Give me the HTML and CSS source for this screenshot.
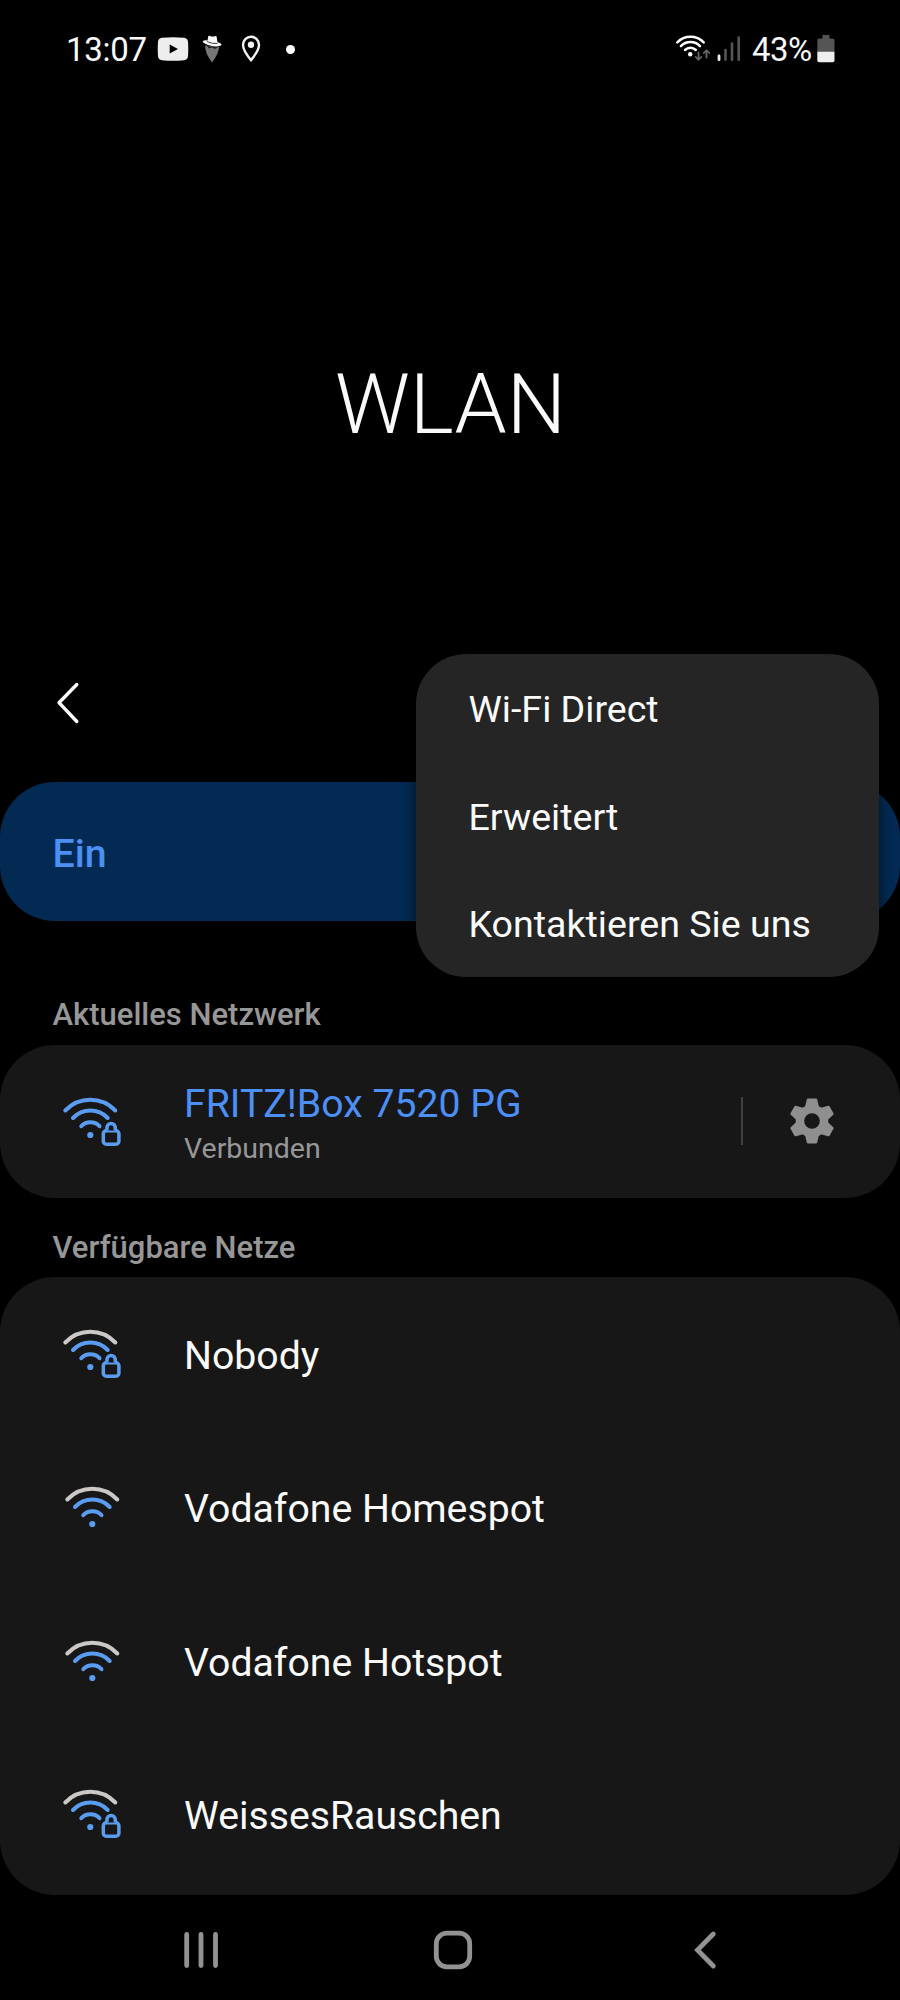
FILE: index.html
```html
<!DOCTYPE html>
<html lang="de">
<head>
<meta charset="utf-8">
<title>WLAN</title>
<link rel="stylesheet" href="styles.css">
</head>
<body>
<svg class="defs" aria-hidden="true">
  <symbol id="wifi" viewBox="0 0 62 54">
    <path class="outer" d="M6.300 17.500A34.500 34.500 0 0 1 56.300 17.500"/>
    <path class="inner" d="M14 25A24 24 0 0 1 48.700 25M22.300 33.200A12.700 12.700 0 0 1 40.500 33.200"/>
    <circle cx="31.300" cy="42" r="3.100"/>
  </symbol>
  <symbol id="lock" viewBox="0 0 24 26">
    <rect x="3.300" y="9.800" width="15.600" height="13.400" rx="3"/>
    <path d="M6.900 9.500V6.800a4.200 4.200 0 0 1 8.400 0V9.500"/>
  </symbol>
</svg>
<div class="screen">
  <header class="status">
    <div class="status-left">
      <span class="clock">13:07</span>
      <svg class="ic-video" width="32" height="24" viewBox="0 0 32 24"><path fill="#eee" d="M5 .8Q16-.4 27 .8Q30.800 1.200 31 5Q31.500 12 31 19Q30.800 22.800 27 23.200Q16 24.200 5 23.200Q1.200 22.800 1 19Q.5 12 1 5Q1.200 1.200 5 .8Z"/><path d="M12.700 7.500 21 12 12.700 16.500Z"/></svg>
      <svg class="ic-spy" width="20" height="28" viewBox="0 0 20 28"><path fill="#777" d="M3 10.500 17 12Q17 18 10 27.500Q3 18 3 10.500Z"/><path fill="#222" d="M5 11 16 12 13 14 10 12.500 7 13.500Z"/><path fill="#fafafa" d="M6.300 1Q8 .3 9 1.500L12 1.500Q14 .3 14.600 1.500L15.500 7.200Q19.500 8.200 19.700 10Q17 12.200 10 11Q1 9 .6 6.200Q2.500 4.600 5.500 5.500Z"/><path fill="none" stroke="#444" d="M5 6.600Q10 9 15.500 8.500"/></svg>
      <svg class="ic-pin" width="20" height="28" viewBox="0 0 20 28"><path fill="none" stroke="#f2f2f2" stroke-width="2.400" d="M10 25.200Q2 15.500 2 9.800A8 8 0 0 1 18 9.800Q18 15.500 10 25.200Z"/><circle cx="10" cy="9.800" r="3.200" fill="#f2f2f2"/></svg>
      <span class="more-dot"></span>
    </div>
    <div class="status-right">
      <svg class="ic-net" width="66" height="30" viewBox="0 0 66 30" fill="none" stroke-linecap="round">
        <path stroke="#fff" stroke-width="2.500" d="M2.300 8.300A18.500 18.500 0 0 1 28.700 8.300M5.900 12.200A13.200 13.200 0 0 1 25 12.200M10 16A7.800 7.800 0 0 1 20.800 16"/>
        <circle cx="15.200" cy="20.300" r="2.200" fill="#fff"/>
        <path stroke="#666" stroke-width="1.800" d="M23.500 18.500V25.500M20.800 23 23.500 25.800 26.200 23M31.500 23.500V16.500M28.800 19 31.500 16.200 34.200 19"/>
        <path stroke="#eee" stroke-width="2.800" d="M44 22V25.700"/>
        <path stroke="#555" stroke-width="2.600" d="M50.500 16V25.700M57 9.500V25.700M63.700 3.500V25.700"/>
      </svg>
      <span class="percent">43%</span>
      <svg class="ic-battery" width="18" height="28" viewBox="0 0 18 28"><path fill="#555" d="M5.500 0H12.500V3.500H15.500Q17.500 3.500 17.500 5.500V17H.3V5.500Q.3 3.500 2.300 3.500H5.500Z"/><path fill="#eee" d="M.3 16.700H17.500V25.500Q17.500 27.300 15.700 27.300H2.100Q.3 27.300 .3 25.500Z"/></svg>
    </div>
  </header>

  <h1 class="title">WLAN</h1>

  <div class="toolbar">
    <svg class="back" width="24" height="42" viewBox="0 0 24 42"><path d="M20.800 2.500 3 20.700 20.800 39.500"/></svg>
    <ul class="menu">
      <li>Wi-Fi Direct</li>
      <li>Erweitert</li>
      <li>Kontaktieren Sie uns</li>
    </ul>
  </div>

  <section class="card switch-card"><span>Ein</span></section>

  <h2 class="section first">Aktuelles Netzwerk</h2>
  <section class="card current">
    <div class="signal locked full"><svg class="wifi"><use href="#wifi"/></svg><svg class="lock"><use href="#lock"/></svg></div>
    <div class="info">
      <div class="name active">FRITZ!Box 7520 PG</div>
      <div class="state">Verbunden</div>
    </div>
    <span class="divider"></span>
    <svg class="gear" width="44" height="46" viewBox="-22 -23 44 46">
      <g>
        <path id="tooth" d="M-7.500-12-5.200-21.500Q-4.900-22.500-4-22.500H4Q4.900-22.500 5.200-21.500L7.500-12Z"/>
        <use href="#tooth" transform="rotate(60)"/><use href="#tooth" transform="rotate(120)"/><use href="#tooth" transform="rotate(180)"/><use href="#tooth" transform="rotate(240)"/><use href="#tooth" transform="rotate(300)"/>
      </g>
      <circle r="16.300"/>
      <circle class="hole" r="7.800"/>
    </svg>
  </section>

  <h2 class="section second">Verfügbare Netze</h2>
  <section class="card list">
    <div class="row"><div class="signal locked"><svg class="wifi"><use href="#wifi"/></svg><svg class="lock"><use href="#lock"/></svg></div><div class="name">Nobody</div></div>
    <div class="row"><div class="signal"><svg class="wifi"><use href="#wifi"/></svg></div><div class="name">Vodafone Homespot</div></div>
    <div class="row"><div class="signal"><svg class="wifi"><use href="#wifi"/></svg></div><div class="name">Vodafone Hotspot</div></div>
    <div class="row"><div class="signal locked"><svg class="wifi"><use href="#wifi"/></svg><svg class="lock"><use href="#lock"/></svg></div><div class="name">WeissesRauschen</div></div>
  </section>

  <nav class="navbar">
    <svg width="36" height="42" viewBox="0 0 36 42"><path d="M3.700 5.500V36.500M18 5.500V36.500M32.500 5.500V36.500"/></svg>
    <svg class="home" width="42" height="42" viewBox="0 0 42 42"><rect x="4.300" y="4.200" width="33.400" height="33.600" rx="10.500"/></svg>
    <svg width="24" height="42" viewBox="0 0 24 42"><path d="M19.300 5 3.500 21 19.300 37"/></svg>
  </nav>
</div>
</body>
</html>
```
FILE: styles.css
```css
* { box-sizing: border-box; }
body {
  margin: 0;
  background: #000;
  color: #fafafa;
  font-family: Roboto, sans-serif;
}
.defs { position: absolute; width: 0; height: 0; }
svg { display: block; flex: none; }
.screen {
  width: 900px;
  height: 2000px;
  display: flex;
  flex-direction: column;
  overflow: hidden;
}

/* Status bar */
.status {
  height: 98px;
  padding: 0 65px 0 66px;
  display: flex;
  justify-content: space-between;
  align-items: center;
  font-size: 33px;
  line-height: 40px;
}
.status-left, .status-right { display: flex; align-items: center; }
.clock { width: 91px; padding-top: 1px; letter-spacing: -0.3px; }
.ic-spy { margin-left: 13px; }
.ic-pin { margin-left: 19px; }
.more-dot { width: 9px; height: 9px; margin-left: 24.500px; border-radius: 50%; background: #fff; }
.ic-net { margin-right: 11px; }
.percent { width: 65px; padding-top: 1px; letter-spacing: -0.6px; }

.title {
  margin: 0;
  height: 556px;
  padding: 257px 0 0 1px;
  text-align: center;
  font-size: 83.500px;
  line-height: 100px;
  font-weight: 300;
}

.toolbar { position: relative; height: 128px; padding: 28px 56px; }
.back { fill: none; stroke: #fff; stroke-width: 3.400; stroke-linecap: round; stroke-linejoin: round; }
.menu {
  position: absolute;
  z-index: 2;
  top: 0;
  right: 21.500px;
  width: 462.500px;
  height: 322.500px;
  margin: 0;
  padding: 0 52.500px;
  list-style: none;
  border-radius: 50px;
  background: #252525;
  box-shadow: 0 3px 14px rgba(0, 0, 0, 0.6);
  font-size: 37.600px;
}
.menu li { height: 107.500px; line-height: 111px; white-space: nowrap; }

/* Cards */
.card { background: #171717; border-radius: 55px; flex: none; }
.switch-card {
  height: 139px;
  padding-left: 52.500px;
  background: #022a52;
  color: #4c8ff5;
  font-size: 39.300px;
  font-weight: 500;
  line-height: 145px;
}
.section {
  margin: 0;
  padding-left: 52.500px;
  color: #979797;
  font-size: 31px;
  line-height: 40px;
  font-weight: 500;
}
.first { height: 124px; padding-top: 74px; }
.second { height: 79px; padding-top: 30px; }
.current { height: 153px; display: flex; align-items: center; }
.signal {
  --outer: #ccc8c6;
  width: 184px;
  padding-left: 60.500px;
  display: flex;
  align-items: flex-start;
  flex: none;
  fill: #5a9df0;
  stroke: none;
}
.wifi { width: 62px; height: 54px; }
.locked { padding: 0 0 8px 59px; }
.full { --outer: #5a9df0; padding-bottom: 4px; }
.lock { width: 24px; height: 26px; margin: 28px 0 0 -21px; fill: #171717; stroke: #5a9df0; stroke-width: 3.500; }
.outer, .inner { fill: none; stroke-width: 4; stroke-linecap: round; }
.outer { stroke: var(--outer); }
.inner { stroke: #5a9df0; }
.info { width: 556.500px; padding-top: 4px; }
.name { font-size: 39.200px; line-height: 46px; white-space: nowrap; }
.active { color: #4c8ff5; }
.state { font-size: 28.500px; line-height: 34px; margin-top: 5px; color: #979797; }
.divider { width: 2.500px; height: 48px; margin-bottom: 2px; background: #404040; }
.gear { margin: 0 0 2px 47px; fill: #8f8f8f; }
.hole { fill: #171717; }
.list { height: 618px; padding-top: 2.500px; }
.row { height: 153.300px; display: flex; align-items: center; }

/* Navigation */
.navbar {
  flex: 1;
  padding: 5px 182px 0 183px;
  display: flex;
  align-items: center;
  justify-content: space-between;
  fill: none;
  stroke: #929292;
  stroke-width: 4.800;
  stroke-linecap: round;
}
.home { margin-right: 8px; }
```
